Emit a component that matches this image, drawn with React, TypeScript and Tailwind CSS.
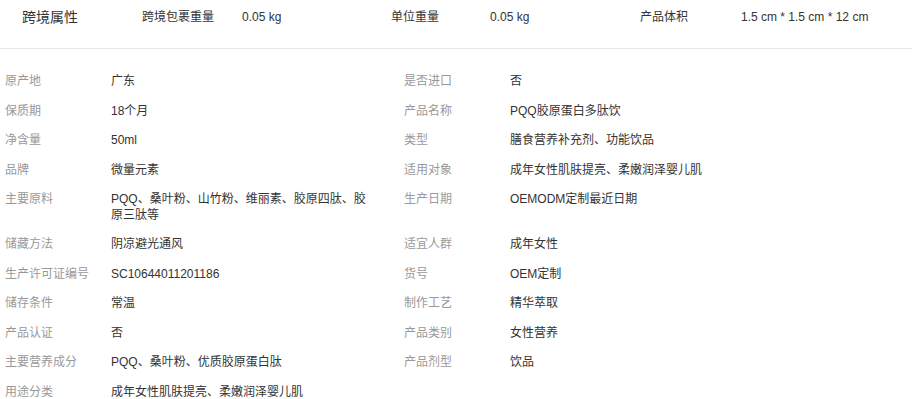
import React from 'react';

const rows: [string, string, string?, string?][] = [
  ['原产地', '广东', '是否进口', '否'],
  ['保质期', '18个月', '产品名称', 'PQQ胶原蛋白多肽饮'],
  ['净含量', '50ml', '类型', '膳食营养补充剂、功能饮品'],
  ['品牌', '微量元素', '适用对象', '成年女性肌肤提亮、柔嫩润泽婴儿肌'],
  ['主要原料', 'PQQ、桑叶粉、山竹粉、维丽素、胶原四肽、胶原三肽等', '生产日期', 'OEMODM定制最近日期'],
  ['储藏方法', '阴凉避光通风', '适宜人群', '成年女性'],
  ['生产许可证编号', 'SC10644011201186', '货号', 'OEM定制'],
  ['储存条件', '常温', '制作工艺', '精华萃取'],
  ['产品认证', '否', '产品类别', '女性营养'],
  ['主要营养成分', 'PQQ、桑叶粉、优质胶原蛋白肽', '产品剂型', '饮品'],
  ['用途分类', '成年女性肌肤提亮、柔嫩润泽婴儿肌'],
];

export default function App() {
  return (
    <div
      className="w-[913px] h-[399px] overflow-hidden bg-white text-[#333]"
      style={{ fontFamily: '"Liberation Sans", "Noto Sans CJK SC", sans-serif' }}
    >
      {/* cross-border header */}
      <div className="flex items-center h-[34px]">
        <div className="w-[142px] pl-[22px] text-[14px]">跨境属性</div>
        <div className="w-[100px] text-[12px]">跨境包裹重量</div>
        <div className="w-[149px] text-[12px]">0.05 kg</div>
        <div className="w-[99px] text-[12px]">单位重量</div>
        <div className="w-[150px] text-[12px]">0.05 kg</div>
        <div className="w-[101px] text-[12px]">产品体积</div>
        <div className="text-[12px]">1.5 cm * 1.5 cm * 12 cm</div>
      </div>
      <div className="mt-[14px] h-px w-[912px] bg-[#e6e6e6]" />

      <div className="pt-[18px] text-[12px] leading-[15.5px]">
        {rows.map(([l1, v1, l2, v2]) => (
          <div key={l1} className="flex py-[7px] pl-[5px]">
            <div className="w-[106px] shrink-0 text-[#999]">{l1}</div>
            <div className="w-[262px] shrink-0 mr-[31px]">{v1}</div>
            <div className="w-[106px] shrink-0 text-[#999]">{l2}</div>
            <div className="flex-1">{v2}</div>
          </div>
        ))}
      </div>
    </div>
  );
}
